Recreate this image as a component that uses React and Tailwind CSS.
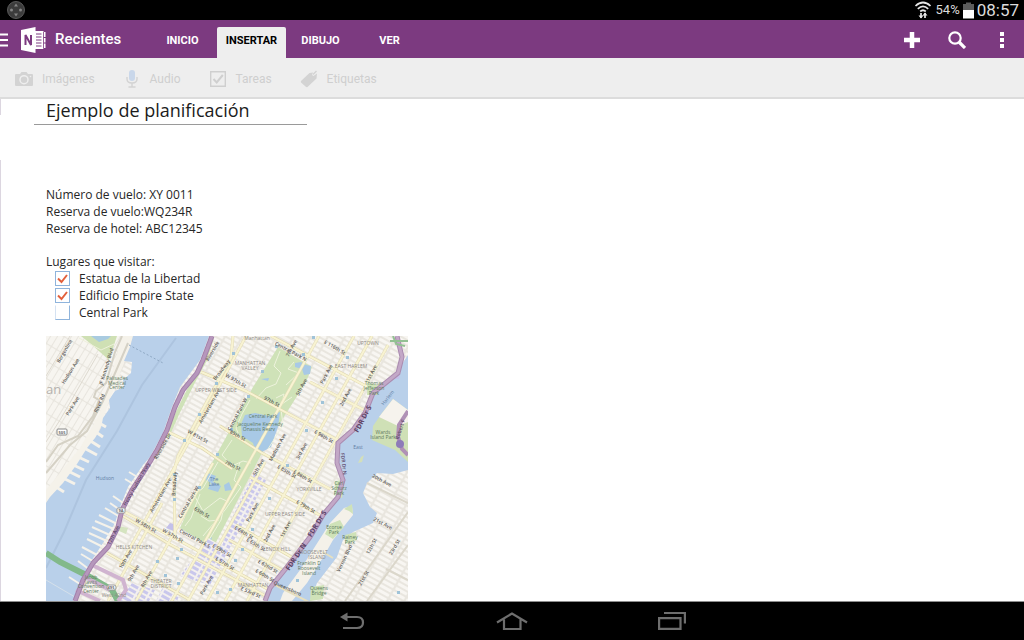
import { useState } from "react";

const tabs = ["INICIO", "INSERTAR", "DIBUJO", "VER"];

const flightInfo = [
  "Número de vuelo: XY 0011",
  "Reserva de vuelo:WQ234R",
  "Reserva de hotel: ABC12345",
];

const initialPlaces = [
  { id: "estatua", name: "Estatua de la Libertad", done: true },
  { id: "edificio", name: "Edificio Empire State", done: true },
  { id: "central", name: "Central Park", done: false },
];

// streets: dark labels, [text, x, y, angle]
const streetLabels = [
  ["Bergenline", 66, 352, -60],
  ["Hudson Ave", 72, 372, -58],
  ["Park Ave", 74, 407, -58],
  ["JF Kennedy Blvd", 108, 367, -73],
  ["River Rd", 101, 404, -66],
  ["Riverside Dr", 164, 447, -60],
  ["Riverside", 214, 352, -60],
  ["Broadway", 223, 371, -52],
  ["Amsterdam Ave", 211, 407, -60],
  ["W 81st St", 197, 438, 29],
  ["Broadway", 176, 484, -86],
  ["Amsterdam Ave", 162, 496, -60],
  ["Central Park W", 190, 503, -60],
  ["65th St", 201, 514, 30],
  ["W 58th St", 145, 527, 30],
  ["W 57th St", 172, 537, 30],
  ["Central Park S", 194, 540, 28],
  ["E 59th St", 221, 552, 30],
  ["E 57th St", 224, 565, 30],
  ["10th Ave", 127, 560, -60],
  ["9th Ave", 135, 574, -60],
  ["8th Ave", 148, 580, -60],
  ["Park Ave", 208, 586, -60],
  ["Central Park N", 290, 353, 28],
  ["7th Ave", 293, 349, -62],
  ["E 116th St", 334, 349, 30],
  ["5th Ave", 303, 388, -62],
  ["Park Ave", 328, 375, -62],
  ["1st Ave", 373, 374, -62],
  ["2nd Ave", 347, 398, -62],
  ["W 97th St", 235, 382, 30],
  ["97th St", 271, 403, 28],
  ["Central Park W", 239, 415, -62],
  ["85th St", 237, 437, 28],
  ["Madison Ave", 279, 448, -62],
  ["3rd Ave", 303, 452, -62],
  ["E 96th St", 323, 438, 30],
  ["79th St", 232, 467, 26],
  ["5th Ave", 260, 468, -62],
  ["E 85th St", 286, 473, 30],
  ["E 86th St", 302, 478, 30],
  ["E 79th St", 305, 508, 30],
  ["Park Ave", 254, 513, -62],
  ["2nd Ave", 271, 534, -62],
  ["1st Ave", 287, 530, -62],
  ["E 66th St", 243, 534, 30],
  ["E 65th St", 255, 546, 30],
  ["E 62nd St", 267, 568, 30],
  ["E 60th St", 264, 577, 30],
  ["E 53rd St", 250, 594, 24],
  ["Queensboro", 287, 590, 24],
  ["20th Ave", 381, 482, 28],
  ["21st Ave", 382, 525, 28],
  ["Vernon Blvd", 346, 559, -64],
  ["12th St", 373, 547, -62],
  ["21st St", 365, 579, -60],
  ["23rd St", 396, 548, -60],
];

const areaLabels = [
  ["MANHATTAN", 250, 365],
  ["VALLEY", 250, 370],
  ["Manhattan", 257, 340],
  ["UPTOWN", 368, 345],
  ["EAST HARLEM", 351, 368],
  ["UPPER WEST SIDE", 216, 392],
  ["YORKVILLE", 309, 491],
  ["UPPER EAST SIDE", 285, 516],
  ["LENOX HILL", 277, 551],
  ["HELLS KITCHEN", 134, 549],
  ["MANHATTAN", 253, 587],
  ["THEATER", 161, 583],
  ["DISTRICT", 161, 588],
  ["ROOSEVELT", 314, 554],
  ["ISLAND", 317, 559],
  ["West 42nd", 114, 597],
];

const parkLabels = [
  ["Central Park", 263, 418],
  ["Jacqueline Kennedy", 260, 426],
  ["Onassis Resrv", 259, 431],
  ["Palisades", 117, 380],
  ["Medical", 117, 385],
  ["Center", 117, 389],
  ["Thomas", 374, 385],
  ["Jefferson", 374, 390],
  ["Park", 374, 395],
  ["Wards", 383, 434],
  ["Island Park", 383, 439],
  ["Carl", 339, 485],
  ["Schurz", 339, 490],
  ["Park", 339, 495],
  ["Ecorse", 334, 529],
  ["Park", 334, 534],
  ["Rainey", 350, 539],
  ["Park", 350, 544],
  ["Queens", 319, 590],
  ["Bridge", 319, 595],
  ["Jacob", 91, 579],
  ["Javits", 91, 584],
  ["Convention", 91, 588],
  ["Center", 91, 593],
  ["Franklin D", 309, 565],
  ["Roosevelt", 309, 570],
  ["Island", 309, 575],
];

const riverLabels = [
  ["Hudson", 105, 480, 0],
  ["East", 358, 449, 0],
  ["Harlem", 389, 399, -52],
  ["The", 214, 481, 0],
  ["Lake", 214, 486, 0],
];

const stations = [
  [216, 383], [199, 414], [184, 440], [217, 454], [313, 337], [347, 357],
  [276, 346], [303, 354], [262, 371], [233, 353], [248, 396], [336, 378],
  [322, 402], [231, 429], [306, 430], [287, 465], [199, 487], [174, 499],
  [174, 474], [269, 498], [252, 529], [242, 549], [235, 560], [230, 589],
  [181, 549], [177, 558], [165, 575], [178, 583], [157, 561], [217, 592],
  [297, 580], [398, 592],
];

// piers along the Hudson, [x, y, length]
const westPiers = [
  [94, 420, 12], [93, 430, 10], [89, 440, 11], [84, 448, 13], [74, 455, 15],
  [69, 463, 15], [66, 470, 14], [61, 477, 14], [53, 485, 11],
];
const eastPiers = [
  [129, 472, 15], [125, 479, 15], [113, 496, 13], [110, 503, 13], [105, 508, 15],
  [99, 515, 18], [95, 521, 21], [92, 527, 20], [89, 533, 20], [87, 539, 18],
  [82, 547, 17], [81, 554, 15], [78, 561, 12], [69, 577, 14],
];

const avenues = [
  "M233 336 L231 358 L199 416 L178 456 L174 472 L175 540",
  "M319 336 L168 608",
  "M354 336 L207 601",
  "M372 336 L225 601",
  "M388 345 L247 601",
  "M265 462 L188 601",
  "M246 336 L204 414 L120 566",
  "M162 503 L108 601",
  "M213 463 L136 601",
];

const crossStreets = [
  "M201 372 L246 391 L302 421 L345 444",
  "M166 431 L202 448 L232 469",
  "M271 336 L400 404",
  "M310 382 L366 411",
  "M220 426 L262 453 L330 489",
  "M250 477 L325 518",
  "M121 510 L180 541 L282 597",
  "M123 516 L171 545 L275 601",
  "M236 525 L300 562",
  "M229 540 L287 573",
  "M107 553 L190 600",
];

function MapDrawing() {
  return (
    <svg
      viewBox="46 336 362 265"
      role="img"
      aria-label="Mapa"
      className="block w-[362px]"
      fontFamily='"Open Sans", sans-serif'
    >
      <defs>
        <pattern id="blocks" width="15" height="5" patternUnits="userSpaceOnUse" patternTransform="rotate(29)">
          <rect width="15" height="5" fill="#e9e6df" />
          <rect x="1" y="1" width="13" height="3" rx="1" fill="#f8f6f2" />
        </pattern>
        <pattern id="blocksWest" width="6" height="15" patternUnits="userSpaceOnUse" patternTransform="rotate(31)">
          <rect width="6" height="15" fill="#e8e5de" />
          <rect x="1" y="1" width="5" height="14" rx="1" fill="#f7f5f0" />
        </pattern>
        <pattern id="shops" width="11" height="5" patternUnits="userSpaceOnUse" patternTransform="rotate(29)">
          <rect width="11" height="5" fill="#f3f0ee" />
          <rect x="1" y="1" width="9" height="3" fill="#c9c7ec" />
        </pattern>
      </defs>

      {/* land */}
      <rect x="46" y="336" width="362" height="265" fill="url(#blocks)" />
      <path d="M46 336H133L98 438L46 503Z" fill="url(#blocksWest)" />
      <path d="M133 336L130 347L125 360L108 404L97 437L77 467L46 503V490L80 448L99 415L110 380L122 336Z" fill="#f5f2ea" />

      {/* Hudson */}
      <path
        d="M133 336L130 347L124 361L132 362L131 373L123 380L124 387L115 391L109 400L110 408L103 418L101 428L95 438L87 448L77 464L63 483L50 497L46 503V601H73L83 577L90 563L103 543L115 523L120 507L128 487L143 465L150 457L163 433L172 407L180 387L200 360L209 336Z"
        fill="#b9d0ea"
      />
      <path d="M176 338L142 385L117 431L86 480L64 532L46 568" fill="none" stroke="#adc4df" strokeWidth="2" />
      <path d="M129 345L163 363" stroke="#8fa9c4" strokeWidth="1" strokeDasharray="2 2" />
      <path d="M46 580L75 597" stroke="#d5e0ea" strokeWidth="1" />
      {westPiers.map(([x, y, len]) => (
        <path key={`${x}-${y}`} d={`M${x} ${y}l${len} 7`} stroke="#f5f2ea" strokeWidth="3" />
      ))}
      {eastPiers.map(([x, y, len]) => (
        <path key={`${x}-${y}`} d={`M${x} ${y}l${len} 9`} stroke="#f5f2ea" strokeWidth="2" />
      ))}

      {/* New Jersey parks and roads */}
      <path d="M81 336L91 344L109 360L117 336Z" fill="#cfe0b4" />
      <path d="M91 336L99 342L108 339L111 336Z" fill="#a9cbe0" />
      <path d="M79 338L101 350L114 344" fill="none" stroke="#eef0da" strokeWidth="1" />
      <path d="M122 336L115 352L106 383L96 391L94 397L99 400L93 416L78 436L58 445L46 462M128 343L119 364L103 401L87 431L70 445L46 473" fill="none" stroke="#d5d1c5" strokeWidth="2" />
      <path d="M70 336L46 376M98 354L60 420L46 442" fill="none" stroke="#dedad0" strokeWidth="1" />

      {/* Central Park */}
      <path d="M278 347L312 367L306 382L285 415L262 453L213 548L180 528L197 490L230 430L253 387Z" fill="#cfe2b8" />
      <path d="M212 338L205 360L193 382L178 412L167 437" fill="none" stroke="#cfe2b8" strokeWidth="4" />
      <path d="M245 415L255 413L269 416L280 412L278 427L274 438L271 447L262 452L255 450L253 443L242 436L241 424Z" fill="#a8c9e6" />
      <path d="M295 363L301 362L306 365L311 366L310 374L304 375L302 369L295 367Z" fill="#a8c9e6" />
      <path d="M208 473L216 476L213 482L221 486L218 492L208 489L211 483L206 480Z" fill="#a8c9e6" />
      <path d="M224 485L229 482L232 490L225 491Z" fill="#a8c9e6" />
      <path d="M261 379L269 378L268 381Z" fill="#a8c9e6" />
      <path d="M206 541L212 537L210 544Z" fill="#a8c9e6" />
      <path
        d="M280 351L274 366L281 373L276 384L266 388L256 399M286 385L299 373L288 369L294 362M276 398L284 394L282 404L292 397M250 400L242 414L236 428L241 440L253 447L265 457M281 409L283 425L268 449M232 440L222 455L232 466L243 461L251 463M240 462L234 480L241 487L225 510L203 536M218 462L203 488L194 495L203 511L220 498L229 502M200 494L191 518L185 526M224 506L221 520L209 540M201 516L209 521L219 520"
        fill="none"
        stroke="#eef3dc"
        strokeWidth="1"
      />

      {/* shopping district */}
      <path d="M254 473L266 480L210 585L180 576L208 538L222 546L231 520Z" fill="url(#shops)" />
      <path d="M132 583L155 590L149 601H120Z" fill="url(#shops)" />
      <path d="M163 587L181 592L177 601H156Z" fill="url(#shops)" />
      <path d="M170 523L176 525L174 531L166 528Z" fill="#c3c0ea" />
      <path d="M119 526L128 528L126 534L119 531Z" fill="#d5e4c0" />

      {/* streets */}
      {crossStreets.map((d) => (
        <path key={d} d={d} fill="none" stroke="#ddd4a8" strokeWidth="3" />
      ))}
      {avenues.map((d) => (
        <path key={d} d={d} fill="none" stroke="#e3dcb6" strokeWidth="3" />
      ))}
      {[...crossStreets, ...avenues].map((d) => (
        <path key={d} d={d} fill="none" stroke="#f8f3d2" strokeWidth="2" />
      ))}

      {/* East River */}
      <path
        d="M408 355L402 364L400 374L392 380L373 395L366 413L354 431L339 441L338 460L344 480L339 497L324 515L311 537L288 567L271 588L266 601H310L317 583L337 557L343 540L353 532L373 523L377 513L370 507L363 493L367 483L377 473L393 474L408 470Z"
        fill="#b9d0ea"
      />
      <path d="M393 399L408 410V462L395 450L372 440L373 426L382 413Z" fill="#cfe0b6" />
      <path d="M393 399L408 410V422L398 426L379 417Z" fill="#f6f3ed" />
      <path d="M352 506L344 508L330 523L316 545L300 570L283 593L280 601H292L307 583L324 556L333 540L353 515Z" fill="#f4f1e9" />
      <path d="M352 504L344 509L349 511L353 514ZM340 520L344 527L333 539L325 534L330 524Z" fill="#cfe2b8" />
      <path d="M345 535L356 532L357 540L345 544ZM311 587L324 585L323 599L310 601Z" fill="#cfe2b8" />
      <path d="M361 457L364 455L362 462L358 463Z" fill="#d3dfba" />
      <path d="M400 374L397 372L390 379L399 379Z" fill="#c3c0ea" />
      <path d="M367 383L380 385L377 395L367 395ZM335 481L345 480L342 498L334 495Z" fill="#cfe2b8" />
      <path d="M323 552L333 558M271 583L313 604" stroke="#e6dfbf" strokeWidth="2" />
      <path d="M408 512L345 601M408 545L367 601M386 569L408 580M367 483L408 503" fill="none" stroke="#dbd7cb" strokeWidth="2" />

      {/* highways */}
      <path d="M46 553L60 562L88 576L112 590L118 601" fill="none" stroke="#82b98a" strokeWidth="6" />
      <path d="M94 566L123 580L126 590L118 601M83 576L110 590M76 590L100 601" fill="none" stroke="#d0b4d0" strokeWidth="4" />
      <path
        d="M212 336L203 360L197 373L183 390L175 407L167 430L157 450L145 470L132 490L122 510L118 527L108 547L93 563L83 580L75 601"
        fill="none"
        stroke="#a481ab"
        strokeWidth="5"
      />
      <path
        d="M212 336L203 360L197 373L183 390L175 407L167 430L157 450L145 470L132 490L122 510L118 527L108 547L93 563L83 580L75 601"
        fill="none"
        stroke="#b697bc"
        strokeWidth="3"
      />
      <path
        d="M397 336L402 357L398 373L373 393L365 413L353 430L338 443L337 463L343 480L338 497L323 515L310 537L287 567L270 588L265 601"
        fill="none"
        stroke="#aa8bb0"
        strokeWidth="5"
      />
      <path
        d="M397 336L402 357L398 373L373 393L365 413L353 430L338 443L337 463L343 480L338 497L323 515L310 537L287 567L270 588L265 601"
        fill="none"
        stroke="#c3a8c7"
        strokeWidth="3"
      />
      <path d="M408 411L399 425L398 437L402 449L408 455" fill="none" stroke="#b091b6" strokeWidth="4" />
      <path d="M393 336L396 344L405 346M390 341H408" fill="none" stroke="#93c193" strokeWidth="2" />
      <circle cx="400" cy="444" r="4" fill="#8e7bb8" />

      {/* road shields */}
      <rect x="57" y="429" width="10" height="6" rx="1" fill="#fff" stroke="#888" />
      <rect x="117" y="508" width="8" height="5" rx="1" fill="#fff" stroke="#999" />
      <rect x="107" y="585" width="9" height="5" rx="2" fill="#fff" stroke="#999" />
      <g fontSize="4" fontWeight="700" fill="#666" textAnchor="middle">
        <text x="62" y="434">505</text>
        <text x="121" y="512">9A</text>
        <text x="111" y="589">495</text>
      </g>

      {stations.map(([x, y]) => (
        <rect key={`${x}-${y}`} x={x - 1} y={y - 1} width="3" height="3" fill="#9fc3d8" />
      ))}

      <g fontSize="5" fontWeight="600" fill="#5c5a56" textAnchor="middle">
        {streetLabels.map(([label, x, y, angle]) => (
          <text key={`${label}-${x}-${y}`} transform={`translate(${x} ${y}) rotate(${angle})`}>
            {label}
          </text>
        ))}
      </g>
      <g fontSize="7" fontWeight="700" fill="#5b4467" textAnchor="middle">
        <text transform="translate(365 420) rotate(-62)">FDR Dr S</text>
        <text transform="translate(319 525) rotate(-58)">FDR Dr S</text>
        <text transform="translate(298 558) rotate(-56)">FDR Dr N</text>
      </g>
      <g fontSize="5" fontWeight="600" fill="#5b4467" textAnchor="middle">
        <text transform="translate(342 464) rotate(83)">FDR Dr N</text>
        <text transform="translate(115 536) rotate(-62)">12th Ave</text>
        <text transform="translate(138 485) rotate(-60)">Henry Hudson Pkwy</text>
        <text transform="translate(402 430) rotate(-72)">Robert F</text>
      </g>
      <g fontSize="5" fill="#8f8b86" textAnchor="middle">
        {areaLabels.map(([label, x, y]) => (
          <text key={`${label}-${x}-${y}`} x={x} y={y}>{label}</text>
        ))}
      </g>
      <g fontSize="5" fill="#5d7a60" textAnchor="middle">
        {parkLabels.map(([label, x, y]) => (
          <text key={`${label}-${x}-${y}`} x={x} y={y}>{label}</text>
        ))}
      </g>
      <g fontSize="5" fill="#5f7fa6" textAnchor="middle">
        {riverLabels.map(([label, x, y, angle]) => (
          <text key={`${label}-${x}-${y}`} transform={`translate(${x} ${y}) rotate(${angle})`}>{label}</text>
        ))}
      </g>
      <text x="46" y="394" fontSize="13" fill="#b5b2ae">an</text>
    </svg>
  );
}

function StatusBar() {
  return (
    <div className="flex h-5 shrink-0 items-center justify-between bg-black pr-[5px] pl-[7px] text-[#dcdcdc]">
      <svg viewBox="0 0 18 18" className="size-[18px]">
        <circle cx="9" cy="9" r="8.5" fill="#3c3c3c" stroke="#5a5a5a" />
        <g fill="#858585">
          <path d="M9 2.5L11 5.5H7ZM9 15.5L7 12.5H11Z" />
          <circle cx="4.5" cy="9" r="1.5" />
          <circle cx="13.5" cy="9" r="1.5" />
        </g>
      </svg>
      <div className="flex items-center">
        <svg viewBox="0 0 18 18" className="mr-1 size-[18px]" fill="none" stroke="#e8e8e8" strokeWidth="1.7">
          <path d="M1.500 5Q9 -2 16.500 5M3.800 7.800Q9 3 14.200 7.800M6.200 10.500Q9 8 11.800 10.500" />
          <path d="M7 12v5M11 17v-5" />
          <path d="M4.500 14.500L7 17.500L9.500 14.500ZM8.500 14.500L11 11.500L13.500 14.500Z" fill="#e8e8e8" stroke="none" />
        </svg>
        <span className="text-[13px]">54%</span>
        <svg viewBox="0 0 11 17" className="mx-[3px] h-[17px] w-[11px]">
          <path d="M3 0.500H8V2H11V9H0V2H3Z" fill="#5c5c5c" />
          <path d="M0 8H11V16.500H0Z" fill="#fff" />
        </svg>
        <span className="text-[17px] leading-5">08:57</span>
      </div>
    </div>
  );
}

function OneNoteLogo() {
  return (
    <svg viewBox="0 0 26 26" className="h-[26px] w-[26px]">
      <path d="M14 4H22.500V22H14Z" fill="#fff" />
      <path d="M22 5H24.500V10H22ZM22 11H24.500V15.500H22ZM22 16.500H24.500V21H22Z" fill="#fff" />
      <path d="M15 7H20.500M15 10H20.500M15 13H20.500M15 16H20.500M15 19H20.500" stroke="#7c3a80" strokeWidth="1" />
      <path d="M22.500 5V21.500" stroke="#7c3a80" strokeWidth="0.800" />
      <path d="M0 3L14.500 0V26L0 23Z" fill="#fff" />
      <path d="M4.500 18V8L10 18V8" fill="none" stroke="#7c3a80" strokeWidth="2" />
    </svg>
  );
}

function ToolButton({ label, children }) {
  return (
    <button disabled className="flex items-center gap-[9px] text-[12px] text-[#cfcfcf]">
      <svg viewBox="0 0 18 18" className="size-[18px]" fill="#d3d3d3">
        {children}
      </svg>
      {label}
    </button>
  );
}

export default function App() {
  const [activeTab, setActiveTab] = useState("INSERTAR");
  const [places, setPlaces] = useState(initialPlaces);

  const togglePlace = (id) => {
    setPlaces(places.map((p) => (p.id === id ? { ...p, done: !p.done } : p)));
  };

  return (
    <div className="flex h-screen flex-col overflow-hidden bg-white font-[Roboto,sans-serif]">
      <StatusBar />

      {/* HEADER */}
      <header className="flex h-[38px] shrink-0 items-stretch bg-[#7c3a80] pt-px text-white">
        <button aria-label="Menú" className="flex w-[21px] items-center">
          <svg viewBox="0 0 8 14" className="h-[14px] w-2" fill="#fff">
            <path d="M0 0.500H8V2.500H0ZM0 6H8V8H0ZM0 11.500H8V13.500H0Z" />
          </svg>
        </button>
        <div className="flex w-[127px] items-center gap-2">
          <OneNoteLogo />
          <span className="text-[15px] font-medium">Recientes</span>
        </div>

        <nav className="flex items-end">
          {tabs.map((tab) => (
            <button
              key={tab}
              onClick={() => setActiveTab(tab)}
              className={`h-[31px] w-[69px] rounded-t-xs pb-[3px] text-[11px] font-bold ${
                activeTab === tab ? "bg-[#eeeeee] text-black" : "text-white"
              }`}
            >
              {tab}
            </button>
          ))}
        </nav>

        <div className="ml-auto flex">
          <button aria-label="Agregar" className="flex w-[45px] items-center justify-center">
            <svg viewBox="0 0 16 16" className="size-4">
              <path d="M8 0V16M0 8H16" stroke="#fff" strokeWidth="4.500" />
            </svg>
          </button>
          <button aria-label="Buscar" className="flex w-[45px] items-center justify-center">
            <svg viewBox="0 0 18 18" className="size-[18px]" fill="none" stroke="#fff">
              <circle cx="7" cy="7" r="5.700" strokeWidth="2.200" />
              <path d="M11 11L17 17" strokeWidth="3.200" />
            </svg>
          </button>
          <button aria-label="Más opciones" className="flex w-[45px] items-center justify-center">
            <svg viewBox="0 0 4 18" className="h-[18px] w-1" fill="#fff">
              <path d="M0 1H4V5H0ZM0 7H4V11H0ZM0 13H4V17H0Z" />
            </svg>
          </button>
        </div>
      </header>

      {/* TOOLBAR */}
      <div className="flex h-[41px] shrink-0 gap-7 border-b-2 border-[#dcdcdc] bg-[#eeeeee] px-[15px] pt-[2px]">
        <ToolButton label="Imágenes">
          <path d="M1 4H5L6.500 2H11.500L13 4H17Q18 4 18 5V15Q18 16 17 16H1Q0 16 0 15V5Q0 4 1 4Z" />
          <circle cx="9" cy="9.700" r="4" fill="none" stroke="#eee" strokeWidth="1.500" />
          <circle cx="15.500" cy="6.500" r="0.800" fill="#eee" />
        </ToolButton>
        <ToolButton label="Audio">
          <rect x="6" y="0" width="6" height="11" rx="3" fill="#c9d7ea" />
          <path d="M4 7V9Q4 13 9 13Q14 13 14 9V7M9 13V17M5.500 17H12.500" fill="none" stroke="#d3d3d3" strokeWidth="1.400" />
        </ToolButton>
        <ToolButton label="Tareas">
          <path d="M1.700 1.700H16.300V16.300H1.700Z" fill="none" stroke="#cfcfcf" strokeWidth="1.400" />
          <path d="M4.500 9L7.700 12.500L13.800 5" fill="none" stroke="#cfcfcf" strokeWidth="2" />
        </ToolButton>
        <ToolButton label="Etiquetas">
          <path d="M1 11L9.500 3L13 2.500L12 5L13.500 6L17 3.500L16.500 8.500L7.500 17Q6.500 17.500 5.500 16.500L1 12.500Q0.500 12 1 11Z" />
          <path d="M13 4.500L16.500 1" stroke="#d3d3d3" strokeWidth="1.400" />
        </ToolButton>
      </div>

      {/* PAGE */}
      <main className="flex min-h-0 flex-1 overflow-hidden border-b border-[#8d8d8d]">
        <div className="flex w-px flex-col">
          <div className="h-4 bg-[#dcd6e0]" />
          <div className="h-[45px]" />
          <div className="flex-1 bg-[#dcd6e0]" />
        </div>
        <div className="flex-1 font-['Open_Sans',sans-serif] text-[#262626]">
          <h1 className="ml-[33px] h-[26px] w-[273px] border-b border-[#9a9a9a] pl-3 text-[18px] leading-[22px] text-[#1c1c1c]">
            Ejemplo de planificación
          </h1>

          <div className="mt-[61px] ml-[45px] text-[12px] leading-[17px]">
            {flightInfo.map((line) => (
              <p key={line}>{line}</p>
            ))}
            <p className="mt-4">Lugares que visitar:</p>
            <ul>
              {places.map((place) => (
                <li key={place.id} className="flex items-center pl-[9px]">
                  <span className="relative size-[15px]">
                    <input
                      type="checkbox"
                      id={place.id}
                      checked={place.done}
                      onChange={() => togglePlace(place.id)}
                      className="block size-[15px] appearance-none border border-[#8fb4dc] not-checked:border-t-transparent not-checked:border-l-[#d5e2f2]"
                    />
                    {place.done && (
                      <svg viewBox="0 0 15 15" className="pointer-events-none absolute inset-0 size-[15px]">
                        <path d="M3 7.500L6.500 11L12 4" fill="none" stroke="#e2603c" strokeWidth="2" />
                      </svg>
                    )}
                  </span>
                  <label htmlFor={place.id} className="pl-[9px]">{place.name}</label>
                </li>
              ))}
            </ul>
            <div className="mt-[15px]">
              <MapDrawing />
            </div>
          </div>
        </div>
      </main>

      {/* ANDROID KEYS */}
      <footer className="flex h-[38px] shrink-0 justify-center bg-black">
        <button aria-label="Atrás" className="flex w-40 items-center justify-center">
          <svg viewBox="0 0 28 20" className="h-5 w-7" fill="none" stroke="#6e6e6e" strokeWidth="2.200">
            <path d="M8 6H19Q25 6 25 11.500Q25 17 19 17H5" />
            <path d="M2 6L9.500 1.500V10.500Z" fill="#6e6e6e" stroke="none" />
          </svg>
        </button>
        <button aria-label="Inicio" className="flex w-40 items-center justify-center">
          <svg viewBox="0 0 32 20" className="h-5 w-8" fill="none" stroke="#6e6e6e" strokeWidth="2.200">
            <path d="M1 11.500L16 2.500L31 11.500M8 8.500V18H24.500V8.500" />
          </svg>
        </button>
        <button aria-label="Recientes" className="flex w-40 items-center justify-center">
          <svg viewBox="0 0 28 20" className="h-5 w-7" fill="none" stroke="#6e6e6e" strokeWidth="2.200">
            <path d="M1.100 7.100H22.500V17.900H1.100ZM6 2H26.900V12.500" />
          </svg>
        </button>
      </footer>
    </div>
  );
}
